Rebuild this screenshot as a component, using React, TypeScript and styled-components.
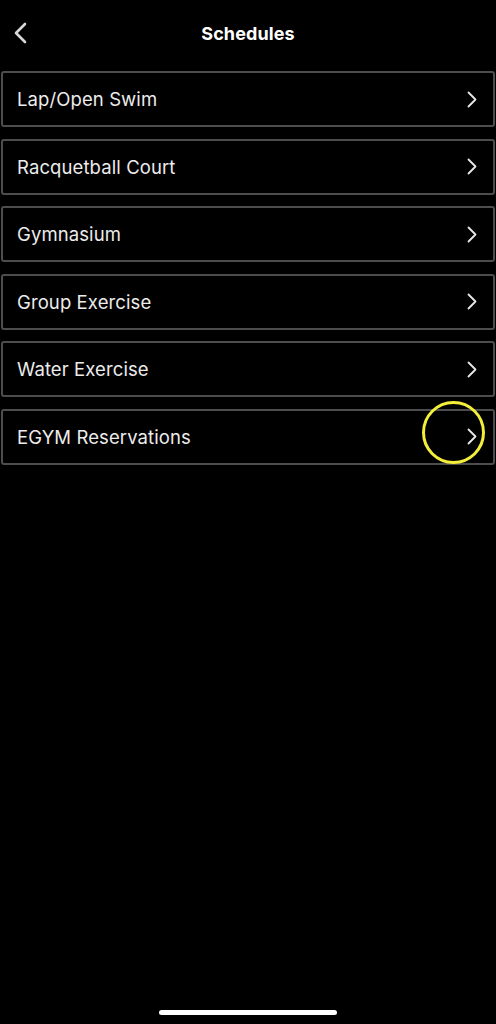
import { createGlobalStyle, styled } from 'styled-components';

const items = [
  'Lap/Open Swim',
  'Racquetball Court',
  'Gymnasium',
  'Group Exercise',
  'Water Exercise',
  'EGYM Reservations',
];

export default function App(): JSX.Element {
  return (
    <>
      <GlobalStyle />
      <Screen>
        <Header>
          <BackButton aria-label="Back">
            <svg width="14" height="22" viewBox="0 0 14 22">
              <path
                d="M12 2 L3 11 L12 20"
                fill="none"
                stroke="#d8d8d8"
                strokeWidth="2.6"
                strokeLinecap="round"
                strokeLinejoin="round"
              />
            </svg>
          </BackButton>
          <Title>Schedules</Title>
        </Header>
        <List>
          {items.map((item, i) => (
            <Row key={item}>
              <Label>{item}</Label>
              <Chevron>
                <svg width="10" height="17" viewBox="0 0 10 17">
                  <path
                    d="M1.5 1.5 L8.5 8.5 L1.5 15.5"
                    fill="none"
                    stroke="#e8e8e8"
                    strokeWidth="1.8"
                    strokeLinecap="round"
                    strokeLinejoin="round"
                  />
                </svg>
                {i === items.length - 1 && <Highlight />}
              </Chevron>
            </Row>
          ))}
        </List>
        <HomeIndicator />
      </Screen>
    </>
  );
}

const GlobalStyle = createGlobalStyle`
  html, body {
    margin: 0;
    padding: 0;
    background: #000;
  }
  body {
    font-family: Inter, "Liberation Sans", sans-serif;
  }
`;

const Screen = styled.div`
  position: relative;
  width: 496px;
  height: 1024px;
  background: #000;
  display: flex;
  flex-direction: column;
  overflow: hidden;
`;

const Header = styled.div`
  position: relative;
  height: 71px;
  display: flex;
  align-items: flex-start;
  justify-content: center;
`;

const BackButton = styled.div`
  position: absolute;
  left: 13px;
  top: 22px;
`;

const Title = styled.h1`
  margin: 23px 0 0;
  font-size: 18px;
  font-weight: 700;
  color: #fff;
  line-height: 22px;
  letter-spacing: 0.1px;
`;

const List = styled.div`
  display: flex;
  flex-direction: column;
  gap: 11.5px;
  padding: 0 1px;
`;

const Row = styled.div`
  box-sizing: border-box;
  height: 56px;
  border: 2px solid #4d4d50;
  border-radius: 3px;
  display: flex;
  align-items: center;
  justify-content: space-between;
  padding: 0 14px 0 14px;
`;

const Label = styled.span`
  font-size: 18.5px;
  color: #ececec;
  letter-spacing: 0.1px;
`;

const Chevron = styled.div`
  position: relative;
  display: flex;
  align-items: center;
  justify-content: center;
  width: 10px;
  height: 17px;
  margin-right: 2px;
`;

const Highlight = styled.div`
  position: absolute;
  left: 50%;
  top: 50%;
  width: 57px;
  height: 57px;
  margin: -36px 0 0 -50px;
  border: 3px solid #f2ee3a;
  border-radius: 50%;
`;

const HomeIndicator = styled.div`
  position: absolute;
  left: 159px;
  bottom: 9px;
  width: 178px;
  height: 5px;
  border-radius: 3px;
  background: #fff;
`;
